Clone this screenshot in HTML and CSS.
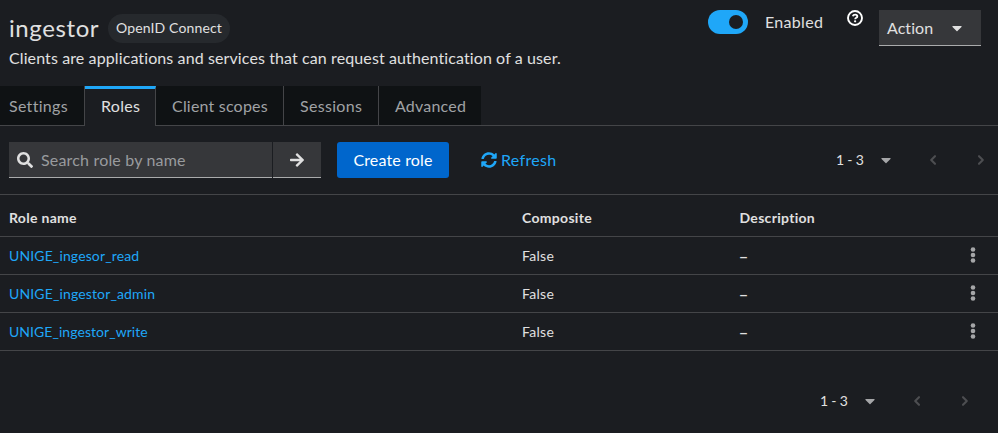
FILE: index.html
```html
<!DOCTYPE html>
<html lang="en">
<head>
<meta charset="utf-8">
<title>ingestor</title>
<link rel="stylesheet" href="styles.css">
</head>
<body>
<svg class="defs" width="0" height="0" aria-hidden="true">
  <symbol id="caret" viewBox="0 0 320 512"><path d="M31.3 192h257.3c17.8 0 26.7 21.5 14.1 34.1L174.1 354.8c-7.8 7.8-20.5 7.8-28.3 0L17.2 226.1C4.6 213.5 13.5 192 31.3 192z"/></symbol>
  <symbol id="left" viewBox="0 0 10 16"><path d="M7 4.2 3.2 8 7 11.8" fill="none" stroke="currentColor" stroke-width="2.1" stroke-linecap="round" stroke-linejoin="round"/></symbol>
  <symbol id="right" viewBox="0 0 10 16"><path d="M3 4.2 6.8 8 3 11.8" fill="none" stroke="currentColor" stroke-width="2.1" stroke-linecap="round" stroke-linejoin="round"/></symbol>
  <symbol id="kebab" viewBox="0 0 6 16"><circle cx="3" cy="2.5" r="2.3"/><circle cx="3" cy="8" r="2.3"/><circle cx="3" cy="13.5" r="2.3"/></symbol>
</svg>
<header class="header">
  <div class="heading">
    <div class="title-row"><h1 class="title">ingestor</h1><span class="badge">OpenID Connect</span></div>
    <p class="subtitle">Clients are applications and services that can request authentication of a user.</p>
  </div>
  <div class="controls">
    <span class="switch"><span class="knob"></span></span>
    <span class="enabled">Enabled</span>
    <svg class="help" viewBox="0 0 16 16"><circle cx="8" cy="8" r="7" fill="none" stroke="currentColor" stroke-width="1.9"/><path d="M5.8 6.3C6.2 5 7 4.6 8.1 4.6c1.2 0 2.2.7 2.2 1.8C10.3 7.8 8.2 7.8 8.2 9.2" fill="none" stroke="currentColor" stroke-width="1.9"/><circle cx="8.1" cy="11.3" r="1.15"/></svg>
    <button class="action"><span>Action</span><svg class="caret"><use href="#caret"/></svg></button>
  </div>
</header>
<nav class="tabs">
  <a class="tab t-settings"><span>Settings</span></a>
  <a class="tab t-roles active"><span>Roles</span></a>
  <a class="tab t-scopes"><span>Client scopes</span></a>
  <a class="tab t-sessions"><span>Sessions</span></a>
  <a class="tab t-advanced"><span>Advanced</span></a>
</nav>
<div class="toolbar">
  <div class="search">
    <svg class="icon" viewBox="0 0 512 512"><path d="M505 442.7L405.3 343c-4.5-4.5-10.6-7-17-7H372c27.6-35.3 44-79.7 44-128C416 93.1 322.9 0 208 0S0 93.1 0 208s93.1 208 208 208c48.3 0 92.7-16.4 128-44v16.3c0 6.4 2.5 12.5 7 17l99.7 99.7c9.4 9.4 24.6 9.4 33.9 0l28.3-28.3c9.4-9.4 9.4-24.6.1-34zM208 336c-70.7 0-128-57.2-128-128 0-70.7 57.2-128 128-128 70.7 0 128 57.2 128 128 0 70.7-57.2 128-128 128z"/></svg>
    <span class="placeholder">Search role by name</span>
  </div>
  <button class="go"><svg viewBox="0 0 448 512"><path d="M190.5 66.9l22.2-22.2c9.4-9.4 24.6-9.4 33.9 0L441 239c9.4 9.4 9.4 24.6 0 33.9L246.6 467.3c-9.4 9.4-24.6 9.4-33.9 0l-22.2-22.2c-9.5-9.5-9.3-25 .4-34.3L311.4 296H24c-13.3 0-24-10.7-24-24v-32c0-13.3 10.7-24 24-24h287.4L190.9 101.2c-9.8-9.3-10-24.8-.4-34.3z"/></svg></button>
  <button class="create"><span>Create role</span></button>
  <a class="refresh"><svg class="icon" viewBox="0 0 512 512"><path d="M370.72 133.28C339.458 104.008 298.888 87.962 255.848 88c-77.458.068-144.328 53.178-162.791 126.85-1.344 5.363-6.122 9.15-11.651 9.15H24.103c-7.498 0-13.194-6.807-11.807-14.176C33.933 94.924 134.813 8 256 8c66.448 0 126.791 26.136 171.315 68.685L463.03 40.97C478.149 25.851 504 36.559 504 57.941V192c0 13.255-10.745 24-24 24H345.941c-21.382 0-32.09-25.851-16.971-40.971l41.75-41.749zM32 296h134.059c21.382 0 32.09 25.851 16.971 40.971l-41.75 41.75c31.262 29.273 71.835 45.319 114.876 45.28 77.418-.07 144.315-53.144 162.787-126.849 1.344-5.363 6.122-9.15 11.651-9.15h57.304c7.498 0 13.194 6.807 11.807 14.176C478.067 417.076 377.187 504 256 504c-66.448 0-126.791-26.136-171.315-68.685L48.97 471.03C33.851 486.149 8 475.441 8 454.059V320c0-13.255 10.745-24 24-24z"/></svg><span>Refresh</span></a>
  <div class="pager">
    <span class="range">1 - 3</span><svg class="caret"><use href="#caret"/></svg>
    <svg class="angle prev"><use href="#left"/></svg><svg class="angle"><use href="#right"/></svg>
  </div>
</div>
<div class="table">
  <div class="row head"><span>Role name</span><span>Composite</span><span>Description</span></div>
  <div class="row"><a class="read">UNIGE_ingesor_read</a><span>False</span><span class="dash">–</span><svg class="kebab"><use href="#kebab"/></svg></div>
  <div class="row"><a class="admin">UNIGE_ingestor_admin</a><span>False</span><span class="dash">–</span><svg class="kebab"><use href="#kebab"/></svg></div>
  <div class="row"><a class="write">UNIGE_ingestor_write</a><span>False</span><span class="dash">–</span><svg class="kebab"><use href="#kebab"/></svg></div>
</div>
<footer class="footer">
  <div class="pager">
    <span class="range">1 - 3</span><svg class="caret"><use href="#caret"/></svg>
    <svg class="angle prev"><use href="#left"/></svg><svg class="angle"><use href="#right"/></svg>
  </div>
</footer>
</body>
</html>
```
FILE: styles.css
```css
* { box-sizing: border-box; }
body { margin: 0; height: 433px; overflow: hidden; background: #1b1d21; color: #e0e0e0; font: 16px/24px Lato, "Liberation Sans", sans-serif; letter-spacing: .3px; white-space: nowrap; }
svg { display: block; flex: none; fill: currentColor; }
.defs { position: absolute; }
button { font: inherit; letter-spacing: inherit; color: inherit; border: 0; margin: 0; padding: 0; }
.header { display: flex; justify-content: space-between; height: 86px; padding: 10px 17px 0 9px; }
.heading { padding-top: 4px; }
.title-row { display: flex; align-items: center; height: 29px; }
.title { width: 99px; margin: 0; font-size: 24px; font-weight: 400; line-height: 27px; height: 29px; letter-spacing: .6px; }
.badge { height: 29px; width: 122px; text-align: center; border-radius: 15px; background: #26292d; font-size: 14px; line-height: 28px; letter-spacing: .15px; }
.subtitle { margin: 3px 0 0; letter-spacing: .107px; }
.controls { display: flex; align-items: flex-start; }
.switch { display: flex; justify-content: flex-end; width: 40px; height: 24px; padding: 5px; border-radius: 12px; background: #1fa7f8; }
.knob { width: 14px; height: 14px; border-radius: 50%; background: #1b1d21; }
.enabled { width: 82px; margin-left: 17px; }
.help { width: 16px; height: 16px; color: #fff; }
.action { display: flex; align-items: center; justify-content: space-between; width: 102px; height: 36px; margin-left: 16px; padding: 0 19px 0 8px; background: #36373a; border-bottom: 1px solid #aaabac; letter-spacing: .05px; }
.caret { width: 10px; height: 16px; }
.tabs { display: flex; height: 40px; border-bottom: 1px solid #444548; }
.tab { height: 39px; border-right: 1px solid #444548; background: #0f1214; color: #a0a2a5; line-height: 40px; padding-left: 16px; }
.t-settings { width: 85px; padding-left: 9px; }
.t-roles { width: 71px; }
.t-scopes { width: 128px; letter-spacing: .2px; }
.t-sessions { width: 95px; }
.t-advanced { width: 102px; border-right: 0; letter-spacing: .2px; }
.tab.active { height: 40px; border-top: 3px solid #1fa7f8; background: #1b1d21; color: #e0e0e0; line-height: 34px; }
.toolbar { display: flex; align-items: center; height: 68px; padding-left: 9px; }
.search { display: flex; align-items: center; gap: 8px; width: 263px; height: 36px; padding-left: 8px; background: #36373a; border-bottom: 1px solid #aaabac; }
.icon { width: 16px; height: 16px; }
.placeholder { color: #999b9e; letter-spacing: .18px; }
.go { display: flex; align-items: center; justify-content: center; width: 48px; height: 36px; margin-left: 1px; background: #36373a; border-bottom: 1px solid #aaabac; }
.go svg { width: 14px; height: 16px; }
.create { width: 112px; height: 36px; margin-left: 16px; border-radius: 3px; background: #06c; color: #fff; letter-spacing: .15px; }
.refresh { display: flex; align-items: center; gap: 4px; margin-left: 32px; color: #1fa7f8; }
.pager { display: flex; align-items: center; margin-left: auto; margin-right: 12px; color: #a5a6a8; }
.range { width: 45px; color: #e0e0e0; font-size: 14px; letter-spacing: -.2px; }
.angle { width: 10px; height: 16px; margin-left: 38px; color: #4d4e51; }
.angle.prev { margin-left: 37px; }
.table { border-top: 1px solid #444548; font-size: 14px; }
.row { display: grid; grid-template-columns: 513px 217.5px 1fr 28px; align-items: center; height: 38px; padding-left: 9px; border-bottom: 1px solid #444548; }
.row.head { height: 42px; padding-top: 4px; font-weight: 700; }
.row a { color: #1fa7f8; }
.read { letter-spacing: .13px; }
.admin { letter-spacing: .14px; }
.write { letter-spacing: .05px; }
.dash { font: 16px/20px "Noto Sans", sans-serif; }
.kebab { width: 6px; height: 16px; margin-bottom: 2px; color: #a5a6a8; }
.footer { display: flex; padding: 38px 16px 0 0; }
```
